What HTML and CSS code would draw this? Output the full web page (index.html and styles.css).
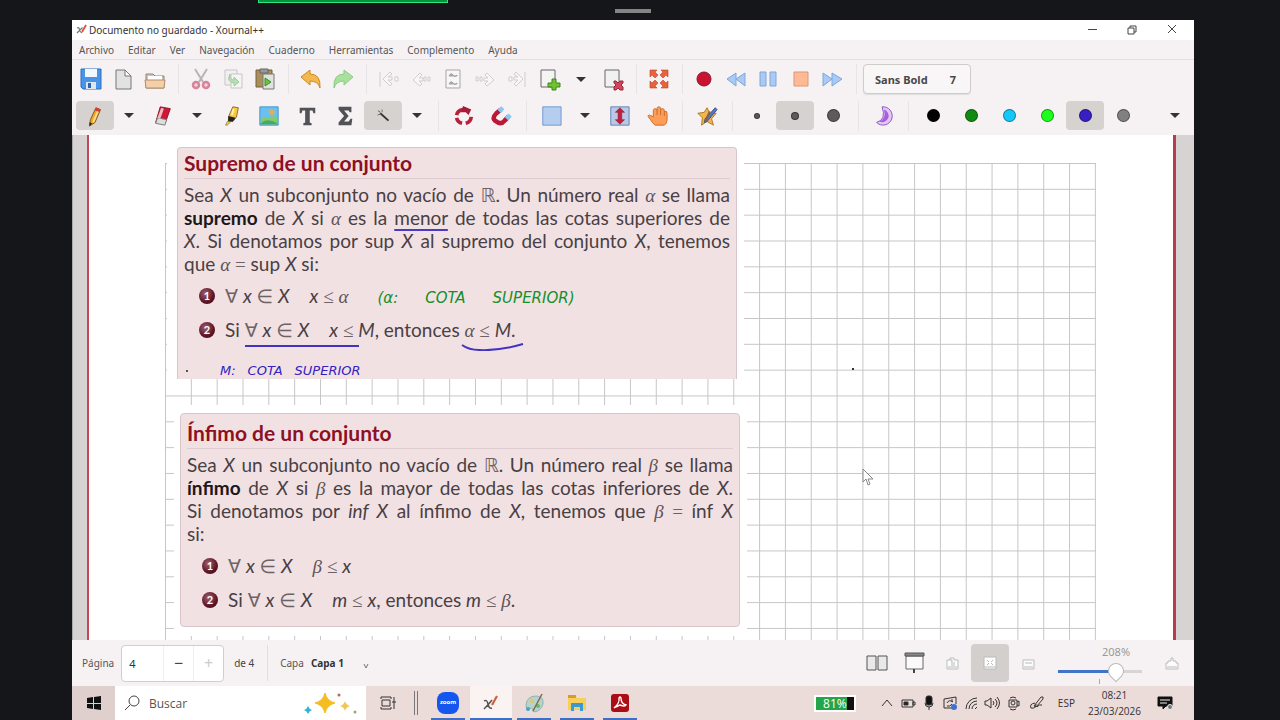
FILE: index.html
```
<!DOCTYPE html>
<html lang="es">
<head>
    <meta charset="UTF-8">
    <meta name="viewport" content="width=device-width, initial-scale=1.0">
    <title>Documento no guardado - Xournal++</title>
    <link rel="stylesheet" href="styles.css">
</head>
<body>
    <div class="share-bar"></div>
    <div class="share-handle"></div>

    <div class="screen">
        <!-- Title bar -->
        <header class="titlebar">
            <svg class="app-icon" viewBox="0 0 12 12"><path d="M1 4q2-1 2.500 1.500T6 9M6.500 3.500Q4 6 1 9" fill="none" stroke="#777" stroke-width="1.200"/><path d="M6 8l4-7" stroke="#e0503a" stroke-width="1.800"/></svg>
            <h1>Documento no guardado - Xournal++</h1>
            <div class="window-buttons">
                <button aria-label="Minimizar"><svg viewBox="0 0 12 12"><path d="M2 5.500h9"/></svg></button>
                <button aria-label="Restaurar"><svg viewBox="0 0 12 12"><path d="M2 4h6v6H2zM4 4V2h6v6H8"/></svg></button>
                <button aria-label="Cerrar"><svg viewBox="0 0 12 12"><path d="M2 1l8 8M10 1l-8 8"/></svg></button>
            </div>
        </header>

        <nav class="menubar">
            <a href="#">Archivo</a>
            <a href="#">Editar</a>
            <a href="#">Ver</a>
            <a href="#">Navegación</a>
            <a href="#">Cuaderno</a>
            <a href="#">Herramientas</a>
            <a href="#">Complemento</a>
            <a href="#">Ayuda</a>
        </nav>

        <!-- Main toolbar -->
        <div class="toolbar main-tools">
            <button aria-label="Guardar"><svg viewBox="0 0 24 24"><path d="M2 2h20v20H4l-2-2z" fill="#4a94e8" stroke="#2d6fbe"/><path d="M6 2h12v8H6z" fill="#f4f8fc"/><path d="M7 15h10v7H7z" fill="#dde6ef"/><path d="M9 16h3v5H9z" fill="#2667b5"/></svg></button>
            <button aria-label="Nuevo"><svg viewBox="0 0 24 24"><path d="M5 3h9l6 6v13H5z" fill="#e3e2e2" stroke="#777"/><path d="M14 3v6h6z" fill="#fff" stroke="#777"/></svg></button>
            <button aria-label="Abrir"><svg viewBox="0 0 24 24"><path d="M3 21V7h7l2 2h9v12z" fill="#cfc5bc" stroke="#938174"/><path d="M5 9h14v5H5z" fill="#fff"/><path d="M2 13h20l-1 8H3z" fill="#f3cfaa" stroke="#b28d6b"/></svg></button>
            <span class="sep"></span>
            <button aria-label="Cortar"><svg viewBox="0 0 24 24"><path d="M6 2l8 13M18 2l-8 13" stroke="#b5b5b5" stroke-width="2"/><circle cx="7" cy="18" r="3" fill="#f4d3dc" stroke="#d78399" stroke-width="2.500"/><circle cx="17" cy="18" r="3" fill="#f4d3dc" stroke="#d78399" stroke-width="2.500"/></svg></button>
            <button class="faded" aria-label="Copiar"><svg viewBox="0 0 24 24"><path d="M4 3h12v15H4z" fill="#eee" stroke="#999"/><path d="M10 7h11v14H10z" fill="#f7f7f7" stroke="#999"/><path d="M9 7q-1 6 4 6v-3l5 5-5 4v-3q-8-1-4-9" fill="#7ccc7c" stroke="#4a4"/></svg></button>
            <button aria-label="Pegar"><svg viewBox="0 0 24 24"><path d="M3 3h16v17H3z" fill="#a98f58" stroke="#77603a"/><path d="M7 2h8v4H7z" fill="#999" stroke="#666"/><path d="M10 7h11v15H10z" fill="#dfe3df" stroke="#777"/><path d="M12 11l6 4-6 4z" fill="#71c046" stroke="#399023"/></svg></button>
            <span class="sep"></span>
            <button aria-label="Deshacer"><svg viewBox="0 0 24 24"><path d="M2 10l9-7v4q11 0 10 14-2-7-10-7v4z" fill="#f5b84c" stroke="#c78c2c"/></svg></button>
            <button aria-label="Rehacer"><svg viewBox="0 0 24 24"><path d="M22 10l-9-7v4Q2 7 3 21q2-7 10-7v4z" fill="#a7e29c" stroke="#8dca86"/></svg></button>
            <span class="sep"></span>
            <button class="nav-icon" aria-label="Primera página"><svg viewBox="0 0 24 24"><path d="M3 5v15M13 5l-7 7 7 7 2-2-4-4h4v-3h-4l4-3zM18 10h3v4h-3z"/></svg></button>
            <button class="nav-icon" aria-label="Página anterior"><svg viewBox="0 0 24 24"><path d="M11 6l-7 7 7 6 2-2-3-3h4v-3h-4l3-3zM15 10h2v4h-2zM19 10h2v4h-2z"/></svg></button>
            <button class="nav-icon dark" aria-label="Página anotada"><svg viewBox="0 0 24 24"><path d="M5 3h14v18H5z"/><path d="M8 9q2-4 4-1t4 0v1zM8 17q2-4 4-1t4 0v1z" fill="#aaa"/></svg></button>
            <button class="nav-icon" aria-label="Página siguiente"><svg viewBox="0 0 24 24"><path d="M14 6l7 7-7 6-2-2 3-3h-4v-3h4l-3-3zM7 10h2v4H7zM3 10h2v4H3z"/></svg></button>
            <button class="nav-icon" aria-label="Última página"><svg viewBox="0 0 24 24"><path d="M20 5v15M11 5l7 7-7 7-2-2 4-4H9v-3h4L9 7zM4 10h3v4H4z"/></svg></button>
            <button aria-label="Añadir página"><svg viewBox="0 0 24 24"><path d="M4 3h14v17H4z" fill="#f4f5f2" stroke="#666"/><path d="M15 12h4v4h4v4h-4v3h-4v-3h-4v-4h4z" fill="#70c32d" stroke="#3c8518"/></svg></button>
            <button class="arrow" aria-label="Opciones de página"></button>
            <button aria-label="Eliminar página"><svg viewBox="0 0 24 24"><path d="M4 3h14v17H4z" fill="#f1f1f1" stroke="#666"/><path d="M13 14h2l2 2 2-2h3v2l-2 2 2 2v3h-3l-2-2-2 2h-2v-3l2-2-2-2z" fill="#d3465a" stroke="#97283b"/></svg></button>
            <span class="sep"></span>
            <button aria-label="Pantalla completa"><svg viewBox="0 0 24 24"><path d="M3 3h7L8 5l3 3-3 3-3-3-2 2zM21 3h-7l2 2-3 3 3 3 3-3 2 2zM3 21h7l-2-2 3-3-3-3-3 3-2-2zM21 21h-7l2-2-3-3 3-3 3 3 2-2z" fill="#e9623b" stroke="#bd4526" stroke-width=".6"/></svg></button>
            <span class="sep"></span>
            <button aria-label="Grabar"><svg viewBox="0 0 24 24"><circle cx="11" cy="12" r="7" fill="#c91431" stroke="#8b1427"/></svg></button>
            <button class="audio" aria-label="Retroceder"><svg viewBox="0 0 24 24"><path d="M11 6v13l-9-7zM20 6v13l-9-7z"/></svg></button>
            <button class="audio" aria-label="Pausa"><svg viewBox="0 0 24 24"><path d="M3 5h6v14H3zM13 5h6v14h-6z"/></svg></button>
            <button class="audio stop" aria-label="Detener"><svg viewBox="0 0 24 24"><path d="M5 5h14v14H5z"/></svg></button>
            <button class="audio" aria-label="Avanzar"><svg viewBox="0 0 24 24"><path d="M2 6v13l9-7zM11 6v13l10-7z"/></svg></button>
            <span class="sep"></span>
            <button class="font-button"><span>Sans Bold</span><span>7</span></button>
        </div>

        <!-- Drawing tools -->
        <div class="toolbar draw-tools">
            <button class="active" aria-label="Lápiz"><svg viewBox="0 0 24 24"><path d="M13 3l5 2-6 14-6 4 1-7z" fill="#f4a51f" stroke="#7a5120"/><path d="M13 3l5 2-1 3-5-2z" fill="#d93a36"/><path d="M15 7l-5 12" stroke="#ffe08a" stroke-width="2"/><path d="M6 19l3 1-3 3z" fill="#222"/></svg></button>
            <button class="arrow" aria-label="Opciones de lápiz"></button>
            <button aria-label="Borrador"><svg viewBox="0 0 24 24"><path d="M9 2l11 2-6 17-10-2z" fill="#ce1736" stroke="#8f1026"/><path d="M6 14l10 2-2 6-10-2z" fill="#ddd" stroke="#777"/><path d="M10 3l3 1-4 11-3-1z" fill="#fff" opacity=".7"/></svg></button>
            <button class="arrow" aria-label="Opciones de borrador"></button>
            <button aria-label="Resaltador"><svg viewBox="0 0 24 24"><path d="M14 2l6 1-2 10-4 5-5-1 1-6z" fill="#f6ca3f" stroke="#84662a"/><path d="M9 12l8 2-3 4-5 0z" fill="#222"/><path d="M8 18l4 0-4 4-2 0z" fill="#edcc36" stroke="#444" stroke-width=".5"/><path d="M15 4l-2 7" stroke="#fff4b1" stroke-width="2"/></svg></button>
            <button aria-label="Imagen"><svg viewBox="0 0 24 24"><path d="M2 2h20v20H2z" fill="#6cc0f0" stroke="#438fc0"/><path d="M3 16q5-6 9-1 5-5 9-1v7H3z" fill="#83cd66"/><path d="M3 20q7-7 18 0v1H3z" fill="#49a865"/><circle cx="15" cy="8" r="3" fill="#dfb057"/></svg></button>
            <button aria-label="Texto"><svg viewBox="0 0 24 24"><path d="M4 3h17v6h-2l-1-3h-3v13l2 1v2H8v-2l2-1V6H7L6 9H4z" fill="#505255"/></svg></button>
            <button aria-label="Fórmula"><svg viewBox="0 0 24 24"><path d="M5 2h14v6h-2l-1-2h-5l5 6-5 6h5l2-3h2l-1 7H5v-3l6-7-6-7z" fill="#505255"/></svg></button>
            <button class="active" aria-label="Reconocedor"><svg viewBox="0 0 24 24"><path d="M9 9l9 8" stroke="#333" stroke-width="2"/><path d="M7 6l2 2M6 11l3-1M11 5l0 3M7 7l1 1" stroke="#666"/></svg></button>
            <button class="arrow" aria-label="Más formas"></button>
            <span class="sep"></span>
            <button aria-label="Girar"><svg viewBox="0 0 24 24"><g fill="none" stroke="#b91f3c" stroke-width="4"><path d="M5 14a8 8 0 0 0 6 6"/><path d="M15 20a8 8 0 0 0 6-7"/><path d="M5 11q1-5 7-6"/></g><path d="M12 1l9 4-3 6-3-3-5 0z" fill="#a71937"/></svg></button>
            <button aria-label="Imán"><svg viewBox="0 0 24 24"><path d="M12 5L7 9q-6 6 0 9 5 4 9-1l4-4" fill="none" stroke="#bd1738" stroke-width="5"/><path d="M10 7l4-4M18 15l4-4" stroke="#8ec8f1" stroke-width="5"/></svg></button>
            <span class="sep"></span>
            <button aria-label="Seleccionar rectángulo"><svg viewBox="0 0 24 24"><path d="M3 2h20v20H3z" fill="#b5ceef" stroke="#6b95cc"/></svg></button>
            <button class="arrow" aria-label="Opciones de selección"></button>
            <button aria-label="Espacio vertical"><svg viewBox="0 0 24 24"><path d="M3 2h20v20H3z" fill="#b8c9e8" stroke="#5d7eae"/><path d="M13 3l5 5h-3v8h3l-5 5-5-5h3V8H8z" fill="#c0203c" stroke="#8c1730" stroke-width=".6"/></svg></button>
            <button aria-label="Mano"><svg viewBox="0 0 24 24"><path d="M10 22q-3-2-5-6-4-4-2-5 2 0 5 2V6q0-2 2-2t2 2V4q0-2 2-2t2 2v1q0-1 2-1t2 2v1q3-1 3 2v7q0 4-3 6z" fill="#ff9c55" stroke="#c76a2c"/><path d="M12 6v5M16 5v6M20 7v5" stroke="#c76a2c"/></svg></button>
            <span class="sep"></span>
            <button aria-label="Forma"><svg viewBox="0 0 24 24"><path d="M12 3l3 6 7 0-5 6 2 7-7-4-6 4 1-8-5-5 7-1z" fill="#f3b54c" stroke="#a87623"/><path d="M21 3l2 2L12 18l-3 1 1-4z" fill="#5779bf" stroke="#384d83"/><path d="M15 7l-5 11" stroke="#8e5e43" stroke-width="2"/></svg></button>
            <span class="sep"></span>
            <button aria-label="Fino"><span class="dot fine"></span></button>
            <button class="active" aria-label="Medio"><span class="dot medium"></span></button>
            <button aria-label="Grueso"><span class="dot thick"></span></button>
            <span class="sep"></span>
            <button aria-label="Relleno"><svg viewBox="0 0 24 24"><path d="M11 2a10 10 0 1 1-6 17q11-3 6-17z" fill="#e2c8f4" stroke="#8a4cc0"/><path d="M13 5a7 7 0 1 1-5 13q8-3 5-13z" fill="#a95ee0"/></svg></button>
            <span class="sep"></span>
            <button aria-label="Negro"><span class="dot black"></span></button>
            <button aria-label="Verde"><span class="dot green"></span></button>
            <button aria-label="Celeste"><span class="dot cyan"></span></button>
            <button aria-label="Verde claro"><span class="dot lime"></span></button>
            <button class="active" aria-label="Azul"><span class="dot blue"></span></button>
            <button aria-label="Gris"><span class="dot gray"></span></button>
            <button class="arrow overflow" aria-label="Más herramientas"></button>
        </div>

        <!-- Notebook page -->
        <main class="canvas">
            <div class="paper">
                <svg class="grid">
                    <defs>
                        <pattern id="squares" width="25.830" height="25.830" patternUnits="userSpaceOnUse"><path d="M0 .5h26M.5 0v26" stroke="#c6c6c8" fill="none"/></pattern>
                    </defs>
                    <rect width="931" height="100%" fill="url(#squares)"/>
                </svg>

                <section class="slide first">
                    <div class="theorem">
                        <h2>Supremo de un conjunto</h2>
                        <div class="statement">
                            <p>Sea <i>X</i> un subconjunto no vacío de <span class="sym">ℝ</span>. Un número real <i class="greek">α</i> se llama</p>
                            <p><b>supremo</b> de <i>X</i> si <i class="greek">α</i> es la <u>menor</u> de todas las cotas superiores de</p>
                            <p><i>X</i>. Si denotamos por sup <i>X</i> al supremo del conjunto <i>X</i>, tenemos</p>
                            <p>que <i class="greek">α</i> <span class="sym">=</span> sup <i>X</i> si:</p>
                        </div>
                        <ol>
                            <li><span class="ball">1</span><span class="sym">∀</span> <i>x</i> <span class="sym">∈</span> <i>X</i><span class="quad"></span><i>x</i> <span class="sym">≤</span> <i class="greek">α</i> <span class="ink green-ink"><span>(α:</span><span>COTA</span><span>SUPERIOR)</span></span></li>
                            <li><span class="ball">2</span>Si <span class="lined"><span class="sym">∀</span> <i>x</i> <span class="sym">∈</span> <i>X</i><span class="quad"></span><i>x</i> <span class="sym">≤</span> <i>M</i></span>, entonces <span class="curved"><i class="greek">α</i> <span class="sym">≤</span> <i>M</i>.<svg viewBox="0 0 64 8"><path d="M1 2q7 5 17 5 20 1 44-6"/></svg></span></li>
                        </ol>
                        <div class="ink blue-ink"><span class="speck"></span><span>M:</span><span>COTA</span><span>SUPERIOR</span></div>
                    </div>
                </section>

                <section class="slide second">
                    <div class="theorem">
                        <h2>Ínfimo de un conjunto</h2>
                        <div class="statement">
                            <p>Sea <i>X</i> un subconjunto no vacío de <span class="sym">ℝ</span>. Un número real <i class="greek">β</i> se llama</p>
                            <p><b>ínfimo</b> de <i>X</i> si <i class="greek">β</i> es la mayor de todas las cotas inferiores de <i>X</i>.</p>
                            <p>Si denotamos por <i>inf X</i> al ínfimo de <i>X</i>, tenemos que <i class="greek">β</i> <span class="sym">=</span> ínf <i>X</i></p>
                            <p>si:</p>
                        </div>
                        <ol>
                            <li><span class="ball">1</span><span class="sym">∀</span> <i>x</i> <span class="sym">∈</span> <i>X</i><span class="quad"></span><i class="greek">β</i> <span class="sym">≤</span> <i>x</i></li>
                            <li><span class="ball">2</span>Si <span class="sym">∀</span> <i>x</i> <span class="sym">∈</span> <i>X</i><span class="quad"></span><i>m</i> <span class="sym">≤</span> <i>x</i>, entonces <i>m</i> <span class="sym">≤</span> <i class="greek">β</i>.</li>
                        </ol>
                    </div>
                </section>

                <span class="pen-mark"></span>
                <svg class="cursor" viewBox="0 0 12 18"><path d="M1 1v13l3-3 2 6 2-1-2-5h5z" fill="#fff" stroke="#888"/></svg>
            </div>
        </main>

        <!-- Status bar -->
        <div class="statusbar">
            <label for="page">Página</label>
            <div class="spinner">
                <input type="text" id="page" value="4">
                <button aria-label="Restar">−</button>
                <button class="off" aria-label="Sumar">+</button>
            </div>
            <span class="total">de 4</span>
            <label for="layer">Capa</label>
            <select id="layer"><option>Capa 1</option></select>
            <svg class="chevron" viewBox="0 0 8 8"><path d="M2 2l2 4 2-4"/></svg>

            <div class="view-tools">
                <button aria-label="Dos páginas"><svg viewBox="0 0 24 24"><path d="M3 5h9v14H3zM14 5h9v14h-9z" fill="#e9e9e9" stroke="#555"/></svg></button>
                <button aria-label="Presentación"><svg viewBox="0 0 24 24"><path d="M4 5h17v13H4z" fill="#fafafa" stroke="#666"/><path d="M3 2h19v3H3z" fill="#888" stroke="#555"/><path d="M12 18v4" stroke="#444" stroke-width="2"/></svg></button>
                <button class="pale" aria-label="Alejar"><svg viewBox="0 0 24 24"><path d="M7 9v9h11V9h-4V7h-4v2zM10 9h2v6M14 11v4M8 16h9"/></svg></button>
                <button class="pale active" aria-label="Ajustar"><svg viewBox="0 0 24 24"><path d="M6 6h12v12H6zM6 16h12M9 9l2 2M15 9l-2 2M9 14l2-2M15 14l-2-2"/></svg></button>
                <button class="pale" aria-label="Zoom 100%"><svg viewBox="0 0 24 24"><path d="M7 9h11v9H7zM9 12h7M8 16h9"/></svg></button>
            </div>
            <div class="zoom">
                <label for="zoom">208%</label>
                <input type="range" id="zoom" min="0" max="100" value="73">
                <span class="tick"></span>
            </div>
            <button class="pale zoom-in" aria-label="Acercar"><svg viewBox="0 0 24 24"><path d="M6 12v6h12v-6h-2v-2h-3V7h-2v3H8v2zM7 16h10"/></svg></button>
        </div>

        <!-- Windows taskbar -->
        <footer class="taskbar">
            <button class="start" aria-label="Inicio"><svg viewBox="0 0 16 16"><path d="M1 3l6-1v6H1zM8 2l7-1v7H8zM1 9h6v5l-6-1zM8 9h7v6l-7-1z"/></svg></button>
            <div class="search">
                <svg class="lens" viewBox="0 0 16 16"><circle cx="10" cy="6" r="5"/><path d="M6 10l-5 5"/></svg>
                <input type="text" placeholder="Buscar" aria-label="Buscar">
                <svg class="sparkles" viewBox="0 0 54 24"><path d="M21 2q2 8 10 10-8 2-10 10-2-8-10-10 8-2 10-10z" fill="#f4bd24" stroke="#f4bd24"/><path d="M41 10q1 4 5 5-4 1-5 5-1-4-5-5 4-1 5-5z" fill="#f1c655"/><path d="M4 15q1 3 4 4-3 1-4 4-1-3-4-4 3-1 4-4z" fill="#2eb4d6"/><circle cx="35" cy="4" r="1.500" fill="#b66a55"/><circle cx="51" cy="21" r="1.500" fill="#9fa86a"/></svg>
            </div>
            <button class="task-view" aria-label="Vista de tareas"><svg viewBox="0 0 16 16"><path d="M1 2h10M1 14h10M2 5h8v6H2zM1 2v2M11 2v2M1 12v2M11 12v2M14 2v3M14 9v5"/><path d="M13 6h2v2h-2z"/></svg></button>
            <span class="rails"></span>
            <div class="apps">
                <button class="zoom-app" aria-label="Zoom"><span>zoom</span></button>
                <button class="current" aria-label="Xournal++"><svg viewBox="0 0 20 20"><path d="M3 8q3-2 4 3t4 4M11 7Q8 11 3 16" fill="none" stroke="#555" stroke-width="1.500"/><path d="M11 12l5-9" stroke="#cf6044" stroke-width="2.200"/></svg></button>
                <button aria-label="Paint"><svg viewBox="0 0 20 20"><path d="M2 12Q3 3 12 3q8 0 7 8-2 7-9 8-2-1-1-3-1-2-4 0-3 1-3-4z" fill="#b4d4cd" stroke="#94b4ad"/><circle cx="8" cy="8" r="2" fill="#e9c35c"/><circle cx="14" cy="13" r="2" fill="#68b85d"/><circle cx="4" cy="16" r="2" fill="#3da5cc"/><path d="M18 1L9 18" stroke="#80685b" stroke-width="1.500"/></svg></button>
                <button aria-label="Explorador"><svg viewBox="0 0 20 20"><path d="M1 3h8l1 2h9v12H1z" fill="#f6d05b"/><path d="M1 2h8v3H1z" fill="#d89b2b"/><path d="M4 18v-8h12v8h-3v-4H7v4z" fill="#3b99d1"/></svg></button>
                <button aria-label="Acrobat"><svg viewBox="0 0 20 20"><rect x="1" y="1" width="18" height="18" rx="3" fill="#ab0c16"/><path d="M4 15q6-5 5-10 1-2 2 0 0 6 5 7-1 2-6 0-5 2-6 3z" fill="none" stroke="#fff" stroke-width="1.400"/></svg></button>
            </div>

            <div class="tray">
                <span class="battery">81%</span>
                <svg viewBox="0 0 16 16"><path d="M3 11l5-6 5 6"/></svg>
                <svg viewBox="0 0 16 16"><path d="M2 5h11v7H2zM13 7h2v3h-2z"/><path d="M4 7h4v3H4z" fill="#222"/></svg>
                <svg viewBox="0 0 16 16"><rect x="5" y="1" width="6" height="9" rx="2" fill="#111"/><path d="M4 8q0 4 4 4t4-4M8 12v3"/></svg>
                <svg viewBox="0 0 16 16"><path d="M12 13H2V4l12-2v7M5 8q2-4 6-1M5 11q3 1 5-2M10 4v3"/><circle cx="12" cy="12" r="3" fill="#3e72d2" stroke="none"/></svg>
                <svg viewBox="0 0 16 16"><path d="M3 14A11 11 0 0 1 14 3M6 14a8 8 0 0 1 8-8M9 14a5 5 0 0 1 5-5M12 14l2-2"/></svg>
                <svg viewBox="0 0 16 16"><path d="M1 6h2l4-3v10l-4-3H1zM9 6q2 2 0 4M11 4q4 4 0 8M13 2q5 6 0 12"/></svg>
                <svg viewBox="0 0 16 16"><path d="M4 5h8v7H4zM5 3q3-2 6 0M5 14q3 2 6 0M12 7l2-1v5l-2-1"/><circle cx="8" cy="8" r="2"/></svg>
                <svg class="pen" viewBox="0 0 16 16"><path d="M5 11l7-9q3-1 2 2l-7 8zM6 8q-6 1-4 5 5 1 5-4M8 12q2-3 5-2"/></svg>
                <span class="lang">ESP</span>
                <time>08:21<br>23/03/2026</time>
                <svg class="notify" viewBox="0 0 16 16"><path d="M1 2h14v9H9l-3 3v-3H1z" fill="#111" stroke="#111"/><path d="M3 5h10M3 8h7" stroke="#eee"/><circle cx="13" cy="12" r="2.500" fill="#777" stroke="#eee"/></svg>
            </div>
        </footer>
    </div>
</body>
</html>
```
FILE: styles.css
```
* {
    box-sizing: border-box;
    margin: 0;
    padding: 0;
}
body {
    background: #151619;
    color: #444;
    font-family: 'Noto Sans', sans-serif;
    font-size: 11px;
    height: 100vh;
    overflow: hidden;
    padding: 20px 86px 0 72px;
}
button {
    background: none;
    border: none;
    color: inherit;
    font: inherit;
    display: flex;
    align-items: center;
    justify-content: center;
    flex-shrink: 0;
}
a {
    color: inherit;
    text-decoration: none;
}
svg {
    flex-shrink: 0;
}
.share-bar {
    position: absolute;
    top: 0;
    left: 258px;
    width: 190px;
    height: 3px;
    background: #08913e;
    border: 1px solid #2fe685;
    border-top: none;
}
.share-handle {
    position: absolute;
    top: 9px;
    left: 615px;
    width: 36px;
    height: 4px;
    background: #858585;
}
.screen {
    height: 100%;
    display: flex;
    flex-direction: column;
    background: #f6f2f3;
}

/* Title and menu */
.titlebar {
    height: 20px;
    background: #fff;
    display: flex;
    align-items: center;
    padding: 0 2px 0 4px;
}
.app-icon {
    width: 12px;
    height: 12px;
    margin-right: 1px;
}
.titlebar h1 {
    font: 10px 'Noto Sans', sans-serif;
    color: #333;
}
.window-buttons {
    display: flex;
    margin-left: auto;
}
.window-buttons button {
    width: 40px;
    height: 20px;
}
.window-buttons svg {
    width: 12px;
    height: 12px;
    fill: none;
    stroke: #444;
}
.menubar {
    height: 20px;
    display: flex;
    align-items: center;
    gap: 14px;
    padding: 0 7px;
    font-size: 10px;
    color: #555;
    border-bottom: 1px solid #e4e0e1;
}

/* Toolbars */
.toolbar {
    display: flex;
    align-items: center;
}
.toolbar svg {
    width: 24px;
    height: 24px;
}
.toolbar .sep {
    height: 30px;
    border-left: 1px solid #e8e4e5;
}
.main-tools {
    height: 38px;
    padding: 0 3px;
}
.main-tools button {
    width: 32px;
    height: 30px;
}
.main-tools .sep {
    margin: 0 6px 0 7px;
}
.draw-tools {
    height: 37px;
    padding: 0 4px 2px;
}
.draw-tools button {
    width: 38px;
    height: 29px;
    border-radius: 4px;
}
.draw-tools svg {
    width: 22px;
    height: 22px;
}
.draw-tools .sep {
    margin: 0 5px 0 6px;
}
.toolbar .active {
    background: #d6d2d0;
}
.toolbar .arrow::after {
    content: "";
    border: 5px solid transparent;
    border-top-color: #333;
    border-bottom: none;
}
.draw-tools .arrow {
    width: 30px;
}
.draw-tools .overflow {
    margin-left: auto;
}
.faded {
    opacity: 0.5;
}
.nav-icon svg {
    fill: #f8f6f6;
    stroke: #d0cdce;
}
.nav-icon.dark svg {
    stroke: #a5a5a5;
}
.audio svg {
    fill: #a9caf4;
    stroke: #7fa6da;
}
.audio.stop svg {
    fill: #ffb994;
    stroke: #dc9776;
}
.toolbar .font-button {
    width: 108px;
    justify-content: space-between;
    padding: 0 14px 0 11px;
    border: 1px solid #d0cccc;
    border-radius: 4px;
    background: #f8f6f6;
    box-shadow: 0 1px 1px #ddd;
    font-weight: bold;
    color: #484848;
}
.dot {
    width: 13px;
    height: 13px;
    border: 1px solid rgba(0, 0, 0, 0.4);
    border-radius: 50%;
    background: #5c5a5a;
}
.dot.fine {
    width: 6px;
    height: 6px;
}
.dot.medium {
    width: 8px;
    height: 8px;
}
.dot.black { background: #000; }
.dot.green { background: #128a12; }
.dot.cyan { background: #14c8fa; }
.dot.lime { background: #1bff1b; }
.dot.blue { background: #381fc4; }
.dot.gray { background: #808080; }

/* Notebook page */
.canvas {
    flex: 1;
    min-height: 0;
    overflow: hidden;
    background: #d7d3d2;
    padding: 0 18px 0 14px;
    border-left: 1px solid #aaa;
}
.paper {
    position: relative;
    height: 100%;
    background: #fff;
    border-left: 2px solid #c44758;
    border-right: 3px solid #b73d4b;
    padding-top: 5px;
}
.grid {
    position: absolute;
    top: 28px;
    left: 76px;
    width: 931px;
    height: 100%;
}
.slide {
    position: relative;
    background: #fff;
}
.slide.first {
    width: 577px;
    margin-left: 78px;
    padding: 7px 7px 0 10px;
}
.slide.second {
    width: 573px;
    margin: 26px 0 0 85px;
    padding: 8px 7px 9px 6px;
}
.theorem {
    background: #f2e1e3;
    border: 1px solid #d9c6ca;
    border-radius: 4px;
    padding: 0 6px;
    font-family: Lato, sans-serif;
    font-size: 19px;
    line-height: 23px;
    color: #484044;
}
.first .theorem {
    height: 232px;
    border-bottom: none;
    border-radius: 4px 4px 0 0;
}
.second .theorem {
    height: 214px;
    padding-top: 4px;
}
.theorem h2 {
    font-size: 21px;
    line-height: 30px;
    color: #8d1024;
    border-bottom: 1px solid #dfccd0;
    margin-bottom: 4px;
}
.statement {
    margin-bottom: 4px;
}
.statement p {
    white-space: nowrap;
    text-align-last: justify;
}
.statement p:last-child {
    text-align-last: left;
}
.theorem b {
    color: #1d1719;
}
.greek {
    font-family: 'Liberation Serif', serif;
    font-size: 19px;
    line-height: 20px;
    color: #5d5356;
}
.sym {
    font-family: 'Liberation Serif', 'DejaVu Sans', serif;
    font-size: 19px;
    line-height: 20px;
    color: #6d6366;
}
.theorem u {
    text-decoration: underline 2px #4a3bc4;
    text-underline-offset: 4px;
}
.theorem ol {
    list-style: none;
    padding-left: 14px;
}
.theorem li {
    height: 34px;
    display: flow-root;
    line-height: 34px;
    white-space: nowrap;
}
.ball {
    float: left;
    width: 16px;
    height: 16px;
    margin: 9px 10px 0 1px;
    border-radius: 50%;
    background: radial-gradient(circle at 40% 35%, #a0606c, #5c1424 60%, #3b0a16);
    color: #fff;
    font-size: 11px;
    font-weight: bold;
    line-height: 16px;
    text-align: center;
}
.quad {
    display: inline-block;
    width: 20px;
}
.lined,
.curved {
    position: relative;
    display: inline-block;
}
.lined::after {
    content: "";
    position: absolute;
    left: 0;
    right: 16px;
    bottom: 0;
    height: 2px;
    background: #4433c2;
}
.curved svg {
    position: absolute;
    left: -4px;
    bottom: -4px;
    width: 64px;
    height: 8px;
    fill: none;
    stroke: #4433c2;
    stroke-width: 2;
}
.ink {
    font-family: 'DejaVu Sans', sans-serif;
    font-style: italic;
}
.green-ink {
    display: inline-flex;
    gap: 27px;
    margin-left: 24px;
    font-size: 15px;
    color: #12902a;
}
.blue-ink {
    display: flex;
    align-items: center;
    gap: 12px;
    margin-top: 14px;
    font-size: 13px;
    line-height: 20px;
    color: #3322c0;
}
.speck {
    width: 2px;
    height: 2px;
    margin: 0 20px 0 2px;
    background: #555;
}
.pen-mark {
    position: absolute;
    top: 233px;
    left: 763px;
    width: 2px;
    height: 2px;
    background: #333;
}
.cursor {
    position: absolute;
    top: 333px;
    left: 773px;
    width: 12px;
    height: 18px;
}

/* Status bar */
.statusbar {
    height: 46px;
    display: flex;
    align-items: center;
    padding: 0 6px 0 10px;
    font-size: 10px;
}
.statusbar label {
    color: #555;
}
.spinner {
    display: flex;
    width: 103px;
    height: 37px;
    margin: 0 10px 0 7px;
    background: #fff;
    border: 1px solid #d2cecf;
    border-radius: 4px;
}
.spinner input {
    width: 41px;
    padding-left: 7px;
    border: none;
    background: none;
    font: inherit;
    font-size: 11px;
    color: #333;
}
.spinner button {
    width: 30px;
    border-left: 1px solid #eee;
    font-size: 16px;
}
.spinner .off {
    color: #ccc;
}
.total {
    height: 36px;
    line-height: 36px;
    width: 34px;
    margin-right: 12px;
    border-right: 1px solid #e1dddd;
}
.statusbar select {
    appearance: none;
    width: 44px;
    margin: 0 7px;
    border: none;
    background: none;
    font: bold 10px 'Noto Sans', sans-serif;
    color: #333;
}
.chevron {
    width: 8px;
    height: 8px;
    margin-top: 6px;
    fill: none;
    stroke: #777;
}
.view-tools {
    display: flex;
    margin-left: auto;
}
.view-tools button {
    width: 38px;
    height: 38px;
    border-radius: 4px;
}
.view-tools svg,
.zoom-in svg {
    width: 24px;
    height: 24px;
}
.pale svg {
    fill: #fcfcfc;
    stroke: #bbb;
}
.view-tools .active {
    background: #d3cfcd;
}
.zoom {
    position: relative;
    width: 84px;
    height: 46px;
    margin: 0 14px 0 11px;
}
.zoom label {
    display: block;
    margin: 4px 0 0 44px;
    font-size: 11px;
    line-height: 16px;
    color: #999;
}
.zoom input {
    appearance: none;
    display: block;
    width: 84px;
    height: 18px;
    margin-top: 2px;
    background: linear-gradient(90deg, #3f74c8 68%, #d8d4d4 68%) center / 100% 3px no-repeat;
}
.zoom input::-webkit-slider-thumb {
    appearance: none;
    width: 16px;
    height: 16px;
    background: #fff;
    border: 1px solid #bcb8b8;
    border-radius: 50% 50% 0 50%;
    transform: rotate(45deg);
}
.tick {
    position: absolute;
    left: 41px;
    bottom: 2px;
    width: 1px;
    height: 5px;
    background: #aaa;
}
.zoom-in {
    width: 32px;
}

/* Taskbar */
.taskbar {
    height: 34px;
    display: flex;
    align-items: stretch;
    background: #ecdcd9;
    font-family: 'Open Sans', sans-serif;
    color: #333;
}
.start {
    width: 43px;
    background: #dfd0ce;
}
.start svg {
    width: 16px;
    height: 16px;
    fill: #111;
}
.search {
    display: flex;
    align-items: center;
    width: 251px;
    padding: 0 8px 0 9px;
    background: #fff;
}
.lens {
    width: 16px;
    height: 16px;
    fill: none;
    stroke: #444;
}
.search input {
    flex: 1;
    min-width: 0;
    margin-left: 9px;
    border: none;
    font: 12px 'Open Sans', sans-serif;
}
.search input::placeholder {
    color: #555;
}
.sparkles {
    width: 54px;
    height: 24px;
}
.task-view {
    width: 44px;
}
.task-view svg {
    width: 16px;
    height: 16px;
    fill: none;
    stroke: #333;
}
.rails {
    width: 4px;
    height: 24px;
    margin: 5px 9px 0 4px;
    border: solid #777;
    border-width: 0 1px;
}
.apps {
    display: flex;
    gap: 1px;
}
.apps button {
    width: 42px;
    background: linear-gradient(#3f6fc4, #3f6fc4) bottom / 34px 2px no-repeat;
}
.apps .current {
    background: linear-gradient(#3f6fc4, #3f6fc4) bottom / 42px 2px no-repeat #fbf3f1;
}
.apps svg {
    width: 20px;
    height: 20px;
}
.zoom-app span {
    width: 22px;
    height: 22px;
    border-radius: 8px;
    background: #1557ee;
    color: #fff;
    font-size: 6px;
    font-weight: bold;
    line-height: 21px;
}
.tray {
    display: flex;
    align-items: center;
    margin-left: auto;
    padding-right: 21px;
}
.tray svg {
    width: 16px;
    height: 16px;
    margin-right: 5px;
    fill: none;
    stroke: #333;
}
.battery {
    width: 42px;
    height: 17px;
    margin-right: 23px;
    border: 2px solid #fff;
    background: linear-gradient(90deg, #23a64b 81%, #111 81%);
    color: #fff;
    font-size: 12px;
    line-height: 13px;
    text-align: center;
}
.tray .pen {
    margin: 0 13px 0 3px;
}
.lang {
    font-size: 10px;
}
.tray time {
    margin: 0 16px 0 13px;
    font-size: 10px;
    line-height: 16px;
    text-align: center;
}
.tray .notify {
    margin-right: 0;
}
```
